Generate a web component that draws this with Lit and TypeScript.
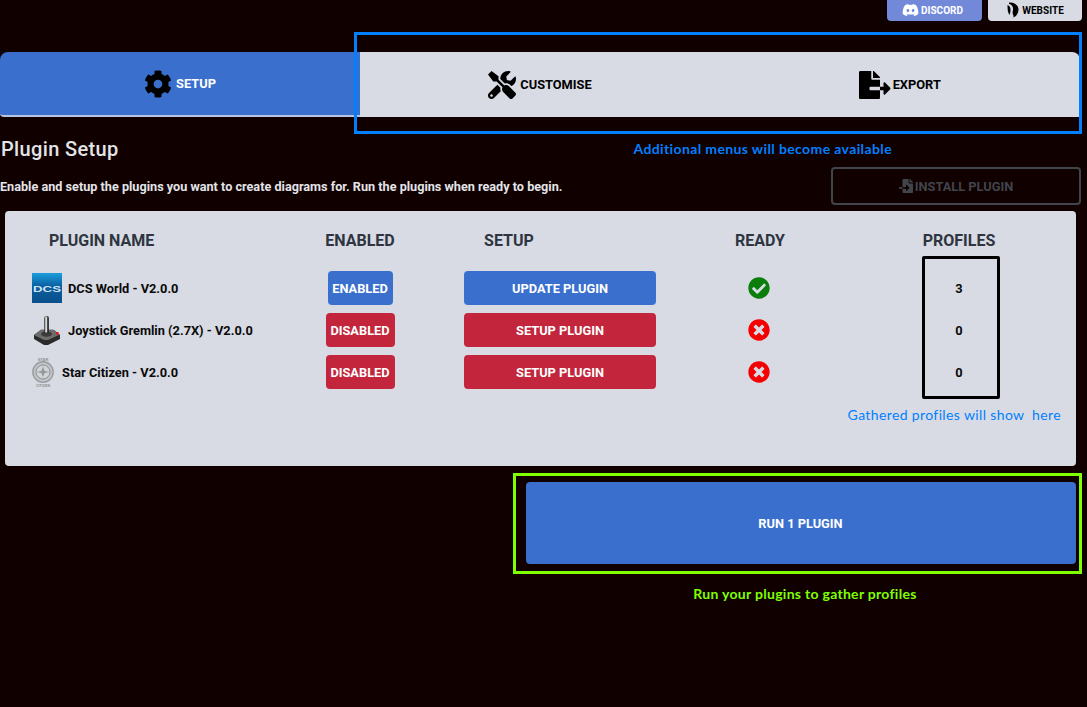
import { LitElement, html, css, svg } from "lit";
import { customElement } from "lit/decorators.js";

const ic = (vb: string, d: string, cls: string) =>
  html`<svg class=${cls} viewBox=${vb} fill="currentColor" aria-hidden="true"><path d=${d}></path></svg>`;

const COG = "M487.4 315.7l-42.6-24.6c4.3-23.2 4.3-47 0-70.2l42.6-24.6c4.9-2.8 7.1-8.6 5.5-14-11.1-35.6-30-67.8-54.7-94.6-3.8-4.1-10-5.1-14.8-2.3L380.8 110c-17.9-15.4-38.5-27.3-60.8-35.1V25.8c0-5.6-3.9-10.5-9.4-11.7-36.7-8.2-74.3-7.8-109.2 0-5.5 1.2-9.4 6.1-9.4 11.7V75c-22.2 7.9-42.8 19.8-60.8 35.1L88.7 85.5c-4.9-2.8-11-1.9-14.8 2.3-24.7 26.7-43.6 58.9-54.7 94.6-1.7 5.4.6 11.2 5.5 14L67.3 221c-4.3 23.2-4.3 47 0 70.2l-42.6 24.6c-4.9 2.8-7.1 8.6-5.5 14 11.1 35.6 30 67.8 54.7 94.6 3.8 4.1 10 5.1 14.8 2.3l42.6-24.6c17.9 15.4 38.5 27.3 60.8 35.1v49.2c0 5.6 3.9 10.5 9.4 11.7 36.7 8.2 74.3 7.8 109.2 0 5.5-1.2 9.4-6.1 9.4-11.7v-49.2c22.2-7.9 42.8-19.8 60.8-35.1l42.6 24.6c4.9 2.8 11 1.9 14.8-2.3 24.7-26.7 43.6-58.9 54.7-94.6 1.5-5.5-.7-11.3-5.6-14.1zM256 336c-44.1 0-80-35.9-80-80s35.9-80 80-80 80 35.9 80 80-35.9 80-80 80z";
const TOOLS = "M501.1 395.7L384 278.6c-23.1-23.1-57.6-27.6-85.4-13.9L192 158.1V96L64 0 0 64l96 128h62.1l106.6 106.6c-13.6 27.8-9.2 62.3 13.9 85.4l117.1 117.1c14.6 14.6 38.2 14.6 52.7 0l52.7-52.7c14.5-14.6 14.5-38.2 0-52.7zM331.7 225c28.3 0 54.9 11 74.9 31l19.4 19.4c15.8-6.9 30.8-16.5 43.8-29.5 37.1-37.1 49.7-89.3 37.9-136.7-2.2-9-13.5-12.1-20.1-5.5l-74.4 74.4-67.9-11.3L334 98.9l74.4-74.4c6.6-6.6 3.4-17.9-5.7-20.2-47.4-11.7-99.6.9-136.6 37.9-28.5 28.5-41.9 66.1-41.2 103.6l82.1 82.1c8.1-1.9 16.5-2.9 24.7-2.9zm-103.9 82l-56.7-56.7L18.7 402.8c-25 25-25 65.5 0 90.5s65.5 25 90.5 0l123.6-123.6c-7.6-19.9-9.9-41.6-5-62.7zM64 472c-13.2 0-24-10.8-24-24 0-13.3 10.7-24 24-24s24 10.7 24 24c0 13.2-10.7 24-24 24z";
const EXPORT = "M384 121.9c0-6.3-2.5-12.4-7-16.9L279.1 7c-4.5-4.5-10.6-7-17-7H256v128h128zM571 308l-95.7-96.4c-10.1-10.1-27.4-3-27.4 11.3V288h-64v64h64v65.2c0 14.3 17.3 21.4 27.4 11.3L571 332c6.6-6.7 6.6-17.4 0-24zm-379 28v-32c0-8.8 7.2-16 16-16h176V160H248c-13.2 0-24-10.8-24-24V0H24C10.7 0 0 10.7 0 24v464c0 13.3 10.7 24 24 24h336c13.3 0 24-10.7 24-24V352H208c-8.8 0-16-7.2-16-16z";
const IMPORT = "M16 288c-8.8 0-16 7.2-16 16v32c0 8.8 7.2 16 16 16h112v-64zm489-183L407.1 7c-4.5-4.5-10.6-7-17-7H384v128h128v-6.1c0-6.3-2.5-12.4-7-16.9zm-153 31V0H152c-13.3 0-24 10.7-24 24v264h128v-65.2c0-14.3 17.3-21.4 27.4-11.3L379 308c6.6 6.7 6.6 17.4 0 24l-95.7 96.4c-10.1 10.1-27.4 3-27.4-11.3V352H128v136c0 13.3 10.7 24 24 24h336c13.3 0 24-10.7 24-24V160H376c-13.2 0-24-10.8-24-24z";
const CHECK = "M504 256c0 136.967-111.033 248-248 248S8 392.967 8 256 119.033 8 256 8s248 111.033 248 248zM227.314 387.314l184-184c6.248-6.248 6.248-16.379 0-22.627l-22.627-22.627c-6.248-6.249-16.379-6.249-22.628 0L216 308.118l-70.059-70.059c-6.248-6.248-16.379-6.248-22.628 0l-22.627 22.627c-6.248 6.248-6.248 16.379 0 22.627l104 104c6.249 6.25 16.379 6.25 22.628.001z";
const TIMES = "M256 8C119 8 8 119 8 256s111 248 248 248 248-111 248-248S393 8 256 8zm121.6 313.1c4.7 4.7 4.7 12.3 0 17L338 377.6c-4.7 4.7-12.3 4.7-17 0L256 312l-65.1 65.6c-4.7 4.7-12.3 4.7-17 0L134.4 338c-4.7-4.7-4.7-12.3 0-17l65.6-65-65.6-65.1c-4.7-4.7-4.7-12.3 0-17l39.6-39.6c4.7-4.7 12.3-4.7 17 0l65 65.7 65.1-65.6c4.7-4.7 12.3-4.7 17 0l39.6 39.6c4.7 4.7 4.7 12.3 0 17L312 256l65.6 65.1z";
const DISCORD = "M524.531,69.836a1.5,1.5,0,0,0-.764-.7A485.065,485.065,0,0,0,404.081,32.03a1.816,1.816,0,0,0-1.923.91,337.461,337.461,0,0,0-14.9,30.6,447.848,447.848,0,0,0-134.426,0,309.541,309.541,0,0,0-15.135-30.6,1.89,1.89,0,0,0-1.924-.91A483.689,483.689,0,0,0,116.085,69.137a1.712,1.712,0,0,0-.788.676C39.068,183.651,18.186,294.69,28.43,404.354a2.016,2.016,0,0,0,.765,1.375A487.666,487.666,0,0,0,176.02,479.918a1.9,1.9,0,0,0,2.063-.676A348.2,348.2,0,0,0,208.12,430.4a1.86,1.86,0,0,0-1.019-2.588,321.173,321.173,0,0,1-45.868-21.853,1.885,1.885,0,0,1-.185-3.126c3.082-2.309,6.166-4.711,9.109-7.137a1.819,1.819,0,0,1,1.9-.256c96.229,43.917,200.41,43.917,295.5,0a1.812,1.812,0,0,1,1.924.233c2.944,2.426,6.027,4.851,9.132,7.16a1.884,1.884,0,0,1-.162,3.126,301.407,301.407,0,0,1-45.89,21.83,1.875,1.875,0,0,0-1,2.611,391.055,391.055,0,0,0,30.014,48.815,1.864,1.864,0,0,0,2.063.7A486.048,486.048,0,0,0,610.7,405.729a1.882,1.882,0,0,0,.765-1.352C623.729,277.594,590.933,167.465,524.531,69.836ZM222.491,337.58c-28.972,0-52.844-26.587-52.844-59.239S193.056,219.1,222.491,219.1c29.665,0,53.306,26.82,52.843,59.239C275.334,310.993,251.924,337.58,222.491,337.58Zm195.38,0c-28.971,0-52.843-26.587-52.843-59.239S388.437,219.1,417.871,219.1c29.667,0,53.307,26.82,52.844,59.239C470.715,310.993,447.538,337.58,417.871,337.58Z";

const dcsLogo = html`<svg class="plogo" viewBox="0 0 30 30" aria-hidden="true">
  <defs><linearGradient id="dg" x1="0" y1="0" x2="0" y2="1">
    <stop offset="0" stop-color="#1a9ddc"></stop><stop offset="0.45" stop-color="#0a5ea0"></stop><stop offset="1" stop-color="#0b4f8c"></stop>
  </linearGradient></defs>
  <rect width="30" height="30" fill="url(#dg)"></rect>
  <text x="15" y="19" text-anchor="middle" font-family="Liberation Sans, sans-serif" font-size="9.8" textLength="28" lengthAdjust="spacingAndGlyphs" fill="#cfe3f2">DCS</text>
</svg>`;

const joyLogo = html`<svg class="plogo" viewBox="0 0 30 30" aria-hidden="true">
  <path d="M2 20 L9 15 L22 15 L28 20 L28 24 L16 30 L12 30 L2 24 Z" fill="#2b2b2b"></path>
  <path d="M2 20 L9 14.5 L21 14.5 L28 19.5 L16 25 L12 25 Z" fill="#6d6d6d"></path>
  <ellipse cx="14.5" cy="19" rx="5.5" ry="2.8" fill="#3b3b3b"></ellipse>
  <rect x="12.3" y="1" width="4.6" height="17.5" rx="2" fill="#2a2a2a"></rect>
  <rect x="13.2" y="1.5" width="2" height="16" fill="#d8d8d8"></rect>
  <rect x="24" y="17" width="2.6" height="2.6" fill="#e01818"></rect>
</svg>`;

const scLogo = html`<svg class="plogo" viewBox="0 0 30 30" aria-hidden="true">
  <circle cx="11" cy="15" r="10.2" fill="#c2c5c8" stroke="#9a9da0" stroke-width="1.4"></circle>
  <circle cx="11" cy="15" r="7" fill="#d2d4d8" stroke="#8c8f92" stroke-width="1"></circle>
  <path d="M4.5 15 L9.3 14 L11 9.5 L12.7 14 L17.5 15 L12.7 16 L11 20 L9.3 16 Z" fill="#96999c"></path>
  <text x="11" y="4" text-anchor="middle" font-family="Liberation Sans, sans-serif" font-weight="700" font-size="4" fill="#8d9093">STAR</text>
  <text x="11" y="29.6" text-anchor="middle" font-family="Liberation Sans, sans-serif" font-weight="700" font-size="3.6" fill="#8d9093">CITIZEN</text>
</svg>`;

const webLogo = svg`<path d="M3 0.5 C8 0 12.5 3 12.5 7.5 C12.5 11.5 10 14.5 7.5 15.5 L7.5 13.5 C6.3 12 6.5 10 7 8 C7.5 5 6 2.5 3 2 Z" fill="#000"></path><path d="M1.5 3 C3.5 3.5 4.5 5.5 4.5 8 C4.5 10 4 11.5 3.5 13 C2 11 1.5 8 1.5 3 Z" fill="#000"></path>`;

const rows = [
  { name: "DCS World - V2.0.0", logo: dcsLogo, gap: "six", on: true, setup: "UPDATE PLUGIN", n: 3 },
  { name: "Joystick Gremlin (2.7X) - V2.0.0", logo: joyLogo, gap: "six", on: false, setup: "SETUP PLUGIN", n: 0 },
  { name: "Star Citizen - V2.0.0", logo: scLogo, gap: "", on: false, setup: "SETUP PLUGIN", n: 0 },
];

@customElement("app-root")
export class AppRoot extends LitElement {
  static styles = css`
    :host {
      display: block;
      position: relative;
      height: 707px;
      overflow: hidden;
      background: #100000;
      font-family: Roboto, "Liberation Sans", sans-serif;
      color: #000;
    }
    .top { display: flex; justify-content: flex-end; gap: 6px; padding-right: 5px; height: 21px; }
    .top-btn {
      width: 95px; height: 21px; box-sizing: border-box; padding-bottom: 1px;
      display: flex; align-items: center; justify-content: center; gap: 2px;
      border-radius: 0 0 4px 4px; font-size: 10px; font-weight: 700;
    }
    .top-btn.discord { background: #7289da; color: #fff; padding-right: 4px; }
    .top-btn.website { background: #d8dbe3; color: #000; width: 94px; }
    .ic-discord { width: 17px; height: 14px; }
    .ic-web { width: 14px; height: 16px; }

    .tabs { display: flex; width: 1080px; height: 65px; margin-top: 31px; }
    .tab {
      width: 360px; box-sizing: border-box;
      display: flex; align-items: center; justify-content: center; gap: 4px;
      font-size: 12.8px; font-weight: 700; background: #d8dbe3; color: #000;
    }
    .tab.active { background: #3a6fce; color: #fff; border-bottom: 2px solid #b8c6e2; border-radius: 8px 0 0 4px; }
    .tab.last { border-radius: 0 8px 0 0; }
    .tab-ic { height: 28px; width: 28px; color: #000; flex: none; }
    .tab-ic.wide { width: 31.5px; margin-right: -2px; }

    .head { display: flex; align-items: center; height: 30px; margin-top: 17px; padding-left: 1px; }
    h1 { margin: 0; font-size: 20px; font-weight: 500; color: #e3e4e8; line-height: 30px; letter-spacing: 0.35px; }
    .note-blue {
      margin-left: auto; margin-right: 195px; padding-bottom: 2px;
      font-family: Lato, sans-serif; font-weight: 700; font-size: 14px; letter-spacing: 0.38px; color: #007fff;
    }
    .sub { display: flex; align-items: center; justify-content: space-between; height: 38px; margin-top: 3px; padding-right: 6px; }
    .sub p { margin: 0; font-size: 12.67px; font-weight: 700; color: #e3e4e8; }
    .install {
      width: 250px; height: 38px; box-sizing: border-box;
      border: 2px solid #41444b; border-radius: 4px;
      display: flex; align-items: center; justify-content: center; gap: 2px;
      font-size: 12.8px; font-weight: 700; color: #41444b;
    }
    .ic-imp { width: 14px; height: 14px; }

    .panel {
      margin: 6px 0 0 5px; width: 1071px; height: 255px; box-sizing: border-box;
      background: #d8dbe3; border-radius: 4px; padding-top: 17px;
    }
    .grid {
      display: grid;
      grid-template-columns: 255px repeat(4, 200px);
      grid-template-rows: 35px repeat(3, 34px);
      row-gap: 8px;
    }
    .th {
      font-size: 16px; font-weight: 700; color: #2e3540;
      display: flex; align-items: center; justify-content: center; height: 24px;
    }
    .th.name { justify-content: flex-start; padding-left: 44px; }
    .th.shift { padding-right: 102px; }
    .th.prof { padding-right: 2px; }
    .pname { grid-column: 1; display: flex; align-items: center; padding-left: 27px; font-size: 12.8px; font-weight: 700; color: #0a0a0a; white-space: nowrap; }
    .plogo { width: 30px; height: 30px; flex: none; }
    .pname span.six { margin-left: 6px; }
    .cell { display: flex; align-items: center; justify-content: center; }
    .btn {
      height: 34px; border-radius: 4px; color: #fff;
      display: flex; align-items: center; justify-content: center;
      font-size: 12.8px; font-weight: 700; box-sizing: border-box;
    }
    .btn.on { background: #3a6fce; }
    .btn.off { background: #c3263c; }
    .b-state.on { width: 65px; }
    .b-state.off { width: 69px; }
    .b-setup { width: 192px; }
    .status { width: 22px; height: 22px; margin-right: 2px; }
    .status.ok { color: #0a7d0a; }
    .status.bad { color: #f50000; }
    .box {
      grid-column: 5; grid-row: 2 / 5; justify-self: start;
      width: 78px; margin: -15px 0 -10px 62px; box-sizing: border-box;
      border: 3px solid #000; border-radius: 2px;
      display: flex; flex-direction: column; align-items: center; padding: 12px 4px 0 0; gap: 8px;
    }
    .box div { height: 34px; display: flex; align-items: center; font-size: 12.8px; font-weight: 700; color: #0a0a0a; }
    .note-gathered {
      margin: 16px 15px 0 0; text-align: right; line-height: 20px;
      font-family: Lato, sans-serif; font-size: 14px; letter-spacing: 0.37px; color: #007fff; white-space: pre;
    }

    .runwrap {
      margin: 7px 0 0 513px; width: 569px; height: 101px; box-sizing: border-box;
      border: 3px solid #7fff00; padding: 6px 3px 7px 10px;
    }
    .run {
      height: 100%; background: #3a6fce; border-radius: 4px; color: #fff;
      display: flex; align-items: center; justify-content: center; padding-right: 1px;
      font-size: 12.8px; font-weight: 700;
    }
    .note-green {
      margin: 10px 0 0 528px; width: 554px; text-align: center; line-height: 20px;
      font-family: Lato, sans-serif; font-weight: 700; font-size: 14px; letter-spacing: 0.29px; color: #7fff00;
    }
    .annot { position: absolute; left: 354px; top: 32px; width: 728px; height: 102px; box-sizing: border-box; border: 3px solid #007fff; pointer-events: none; }
  `;

  render() {
    return html`
      <div class="top">
        <div class="top-btn discord">${ic("0 0 640 512", DISCORD, "ic-discord")}DISCORD</div>
        <div class="top-btn website"><svg class="ic-web" viewBox="0 0 14 16" aria-hidden="true">${webLogo}</svg>WEBSITE</div>
      </div>
      <div class="tabs">
        <div class="tab active">${ic("0 0 512 512", COG, "tab-ic")}SETUP</div>
        <div class="tab">${ic("0 0 512 512", TOOLS, "tab-ic")}CUSTOMISE</div>
        <div class="tab last">${ic("0 0 576 512", EXPORT, "tab-ic wide")}EXPORT</div>
      </div>
      <div class="head">
        <h1>Plugin Setup</h1>
        <div class="note-blue">Additional menus will become available</div>
      </div>
      <div class="sub">
        <p>Enable and setup the plugins you want to create diagrams for. Run the plugins when ready to begin.</p>
        <div class="install">${ic("0 0 512 512", IMPORT, "ic-imp")}INSTALL PLUGIN</div>
      </div>
      <div class="panel">
        <div class="grid">
          <div class="th name">PLUGIN NAME</div>
          <div class="th">ENABLED</div>
          <div class="th shift">SETUP</div>
          <div class="th">READY</div>
          <div class="th prof">PROFILES</div>
          ${rows.map(
            (r) => html`
              <div class="pname">${r.logo}<span class=${r.gap}>${r.name}</span></div>
              <div class="cell"><div class="btn b-state ${r.on ? "on" : "off"}">${r.on ? "ENABLED" : "DISABLED"}</div></div>
              <div class="cell"><div class="btn b-setup ${r.on ? "on" : "off"}">${r.setup}</div></div>
              <div class="cell">${r.on
                ? ic("0 0 512 512", CHECK, "status ok")
                : ic("0 0 512 512", TIMES, "status bad")}</div>
            `
          )}
          <div class="box">${rows.map((r) => html`<div>${r.n}</div>`)}</div>
        </div>
        <div class="note-gathered">Gathered profiles will show  here</div>
      </div>
      <div class="runwrap"><div class="run">RUN 1 PLUGIN</div></div>
      <div class="note-green">Run your plugins to gather profiles</div>
      <div class="annot"></div>
    `;
  }
}
